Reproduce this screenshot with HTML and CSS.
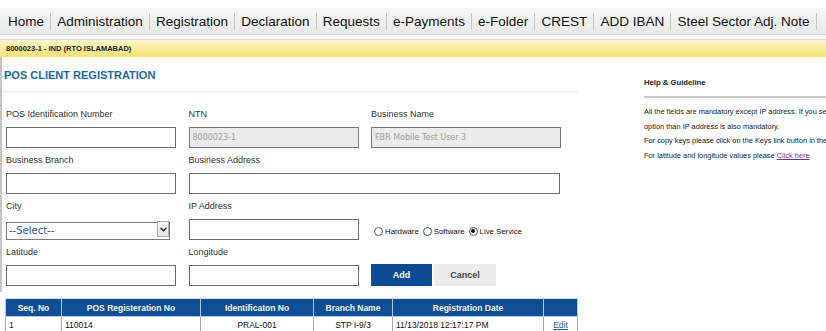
FILE: index.html
```html
<!DOCTYPE html>
<html lang="en">
<head>
    <meta charset="UTF-8">
    <meta name="viewport" content="width=device-width, initial-scale=1.0">
    <title>POS Client Registration</title>
    <link rel="stylesheet" href="styles.css">
</head>
<body>
    <nav class="main-menu">
        <a href="#">Home</a>
        <a href="#">Administration</a>
        <a href="#">Registration</a>
        <a href="#">Declaration</a>
        <a href="#">Requests</a>
        <a href="#">e-Payments</a>
        <a href="#">e-Folder</a>
        <a href="#">CREST</a>
        <a href="#">ADD IBAN</a>
        <a href="#">Steel Sector Adj. Note</a>
    </nav>
    <div class="account-bar">8000023-1 - IND (RTO ISLAMABAD)</div>

    <div class="content">
        <div class="left-col">
            <div class="form-area">
                <h1 class="page-title">POS CLIENT REGISTRATION</h1>
                <div class="form-grid">
                    <div class="field">
                        <label class="field-label">POS Identification Number</label>
                        <input type="text" class="text-input">
                    </div>
                    <div class="field">
                        <label class="field-label">NTN</label>
                        <input type="text" class="text-input readonly" value="8000023-1" readonly>
                    </div>
                    <div class="field">
                        <label class="field-label">Business Name</label>
                        <input type="text" class="text-input readonly" value="FBR Mobile Test User 3" readonly>
                    </div>

                    <div class="field">
                        <label class="field-label">Business Branch</label>
                        <input type="text" class="text-input">
                    </div>
                    <div class="field field-wide">
                        <label class="field-label">Business Address</label>
                        <input type="text" class="text-input">
                    </div>

                    <div class="field">
                        <label class="field-label">City</label>
                        <div class="select-wrap">
                            <select class="city-select">
                                <option>--Select--</option>
                            </select>
                            <span class="select-arrow">
                                <svg width="7" height="5" viewBox="0 0 7 5"><path d="M0.5 0.8 L3.5 3.8 L6.5 0.8" fill="none" stroke="#222" stroke-width="1.3"/></svg>
                            </span>
                        </div>
                    </div>
                    <div class="field">
                        <label class="field-label">IP Address</label>
                        <input type="text" class="text-input">
                    </div>
                    <div class="field field-end">
                        <div class="radio-group">
                            <label class="radio-item"><input type="radio" name="mode"> Hardware</label>
                            <label class="radio-item"><input type="radio" name="mode"> Software</label>
                            <label class="radio-item"><input type="radio" name="mode" checked> Live Service</label>
                        </div>
                    </div>

                    <div class="field">
                        <label class="field-label">Latitude</label>
                        <input type="text" class="text-input">
                    </div>
                    <div class="field">
                        <label class="field-label">Longitude</label>
                        <input type="text" class="text-input">
                    </div>
                    <div class="field field-end">
                        <div class="button-row">
                            <button class="btn btn-add">Add</button>
                            <button class="btn btn-cancel">Cancel</button>
                        </div>
                    </div>
                </div>
            </div>

            <table class="grid">
                <thead>
                    <tr>
                        <th class="col-seq">Seq. No</th>
                        <th class="col-pos">POS Registeration No</th>
                        <th class="col-id">Identificaton No</th>
                        <th class="col-branch">Branch Name</th>
                        <th class="col-date">Registration Date</th>
                        <th class="col-edit"></th>
                    </tr>
                </thead>
                <tbody>
                    <tr>
                        <td>1</td>
                        <td>110014</td>
                        <td class="center">PRAL-001</td>
                        <td class="center">STP I-9/3</td>
                        <td>11/13/2018 12:17:17 PM</td>
                        <td class="center"><a href="#">Edit</a></td>
                    </tr>
                </tbody>
            </table>
        </div>

        <aside class="help">
            <h2 class="help-title">Help &amp; Guideline</h2>
            <p>All the fields are mandatory except IP address. If you select Hardware or Software</p>
            <p>option than IP address is also mandatory.</p>
            <p>For copy keys please click on the Keys link button in the grid.</p>
            <p>For latitude and longitude values please <a href="#" class="visited">Click here</a></p>
        </aside>
    </div>
</body>
</html>
```

FILE: styles.css
```css
* {
    margin: 0;
    padding: 0;
    box-sizing: border-box;
}

html, body {
    overflow: hidden;
}

body {
    width: 826px;
    height: 331px;
    background-color: #ffffff;
    font-family: "Liberation Sans", Arial, sans-serif;
    color: #333;
}

/* top menu */
.main-menu {
    display: flex;
    align-items: center;
    margin-top: 8px;
    height: 27px;
    padding-left: 1.9px;
    background: linear-gradient(#f8f8f8, #e9e9e9);
    border-bottom: 1px solid #d6d6d6;
    white-space: nowrap;
}

.main-menu a {
    font-size: 13.5px;
    line-height: 17px;
    color: #111;
    text-decoration: none;
    padding: 0 6.1px;
    border-right: 1px solid #c6c6c6;
}

.account-bar {
    margin-top: 4px;
    height: 18px;
    padding-left: 6px;
    font-size: 7.5px;
    font-weight: bold;
    line-height: 17px;
    color: #222;
    background: linear-gradient(#fdf7cb, #f8e073);
    border-top: 1px solid #d4d4d4;
}

.content {
    display: flex;
    align-items: flex-start;
}

.left-col {
    width: 578px;
    flex-shrink: 0;
}

/* form */
.form-area {
    border-left: 2px solid #c4c4c4;
    padding-bottom: 6px;
}

.page-title {
    font-size: 11px;
    line-height: 14px;
    font-weight: bold;
    color: #1c69a6;
    padding: 11px 0 9px 2px;
    border-bottom: 1px solid #ececec;
}

.form-grid {
    display: grid;
    grid-template-columns: 170px 170px 190px;
    column-gap: 12.5px;
    row-gap: 6px;
    padding: 16px 0 0 4px;
}

.field {
    display: flex;
    flex-direction: column;
}

.field-wide {
    grid-column: 2 / 4;
    padding-right: 1px;
}

.field-end {
    justify-content: flex-end;
}

.field-label {
    font-size: 9px;
    line-height: 12px;
    color: #333;
    margin-bottom: 7px;
}

.text-input {
    height: 21px;
    width: 100%;
    border: 1px solid #6c6c6c;
    background: #fff;
    padding: 0 3px;
    font-family: "DejaVu Sans", Verdana, sans-serif;
    font-size: 8px;
    outline: none;
}

.text-input.readonly {
    background: #ebebeb;
    color: #a0a0a0;
    border-color: #777;
}

.select-wrap {
    position: relative;
    width: 164px;
    height: 18px;
    margin-top: 1px;
}

.city-select {
    appearance: none;
    -webkit-appearance: none;
    width: 100%;
    height: 100%;
    border: 1px solid #7a7a7a;
    background: #fff;
    padding: 0 0 0 2px;
    font-family: "DejaVu Sans", Verdana, sans-serif;
    font-size: 10px;
    color: #1f5a96;
    outline: none;
}

.select-arrow {
    position: absolute;
    top: 1px;
    right: 1px;
    width: 12px;
    height: 16px;
    border: 1px solid #a8a8a8;
    background: linear-gradient(#fafafa, #e4e4e4);
    display: flex;
    align-items: center;
    justify-content: center;
    pointer-events: none;
}

.radio-group {
    display: flex;
    align-items: center;
    gap: 4px;
    height: 21px;
    padding: 3px 0 0 3px;
}

.radio-item {
    display: flex;
    align-items: center;
    gap: 2px;
    font-size: 7.8px;
    color: #111;
}

.radio-item input {
    appearance: none;
    -webkit-appearance: none;
    width: 9px;
    height: 9px;
    border: 1px solid #555;
    border-radius: 50%;
    background: #fff;
    display: flex;
    align-items: center;
    justify-content: center;
}

.radio-item input:checked::after {
    content: "";
    width: 4px;
    height: 4px;
    border-radius: 50%;
    background: #111;
}

.button-row {
    display: flex;
    gap: 2px;
}

.btn {
    height: 22px;
    border: none;
    font-family: "Liberation Sans", Arial, sans-serif;
    font-size: 9px;
    font-weight: bold;
    cursor: pointer;
}

.btn-add {
    width: 61px;
    background: #0b4c93;
    color: #fff;
}

.btn-cancel {
    width: 62px;
    background: #ececec;
    color: #444;
}

/* result grid */
.grid {
    margin: 6px 0 0 5px;
    width: 572px;
    border-collapse: collapse;
    font-size: 8.5px;
    table-layout: fixed;
}

.grid th {
    height: 18px;
    background: #0d4e94;
    color: #f4f6fa;
    font-weight: bold;
    border: 1px solid #b9c8da;
    border-top-color: #d6dee8;
}

.grid td {
    height: 16px;
    padding: 0 3px;
    color: #111;
    border: 1px solid #a6a6a6;
}

.grid td.center {
    text-align: center;
}

.grid a {
    color: #1a5fb4;
}

.col-seq { width: 56px; }
.col-pos { width: 139px; }
.col-id { width: 113px; }
.col-branch { width: 79px; }
.col-date { width: 151px; }
.col-edit { width: 34px; }

/* help panel */
.help {
    margin-left: 66px;
    width: 400px;
    flex-shrink: 0;
    font-size: 7.4px;
    color: #222;
}

.help-title {
    font-size: 7.7px;
    font-weight: bold;
    line-height: 10px;
    margin-top: 21px;
    padding-bottom: 8px;
    border-bottom: 2px solid #cccccc;
    color: #222;
}

.help p {
    line-height: 14.5px;
    white-space: nowrap;
}

.help-title + p {
    margin-top: 7px;
}

.help a.visited {
    color: #7b2c8f;
}
```
